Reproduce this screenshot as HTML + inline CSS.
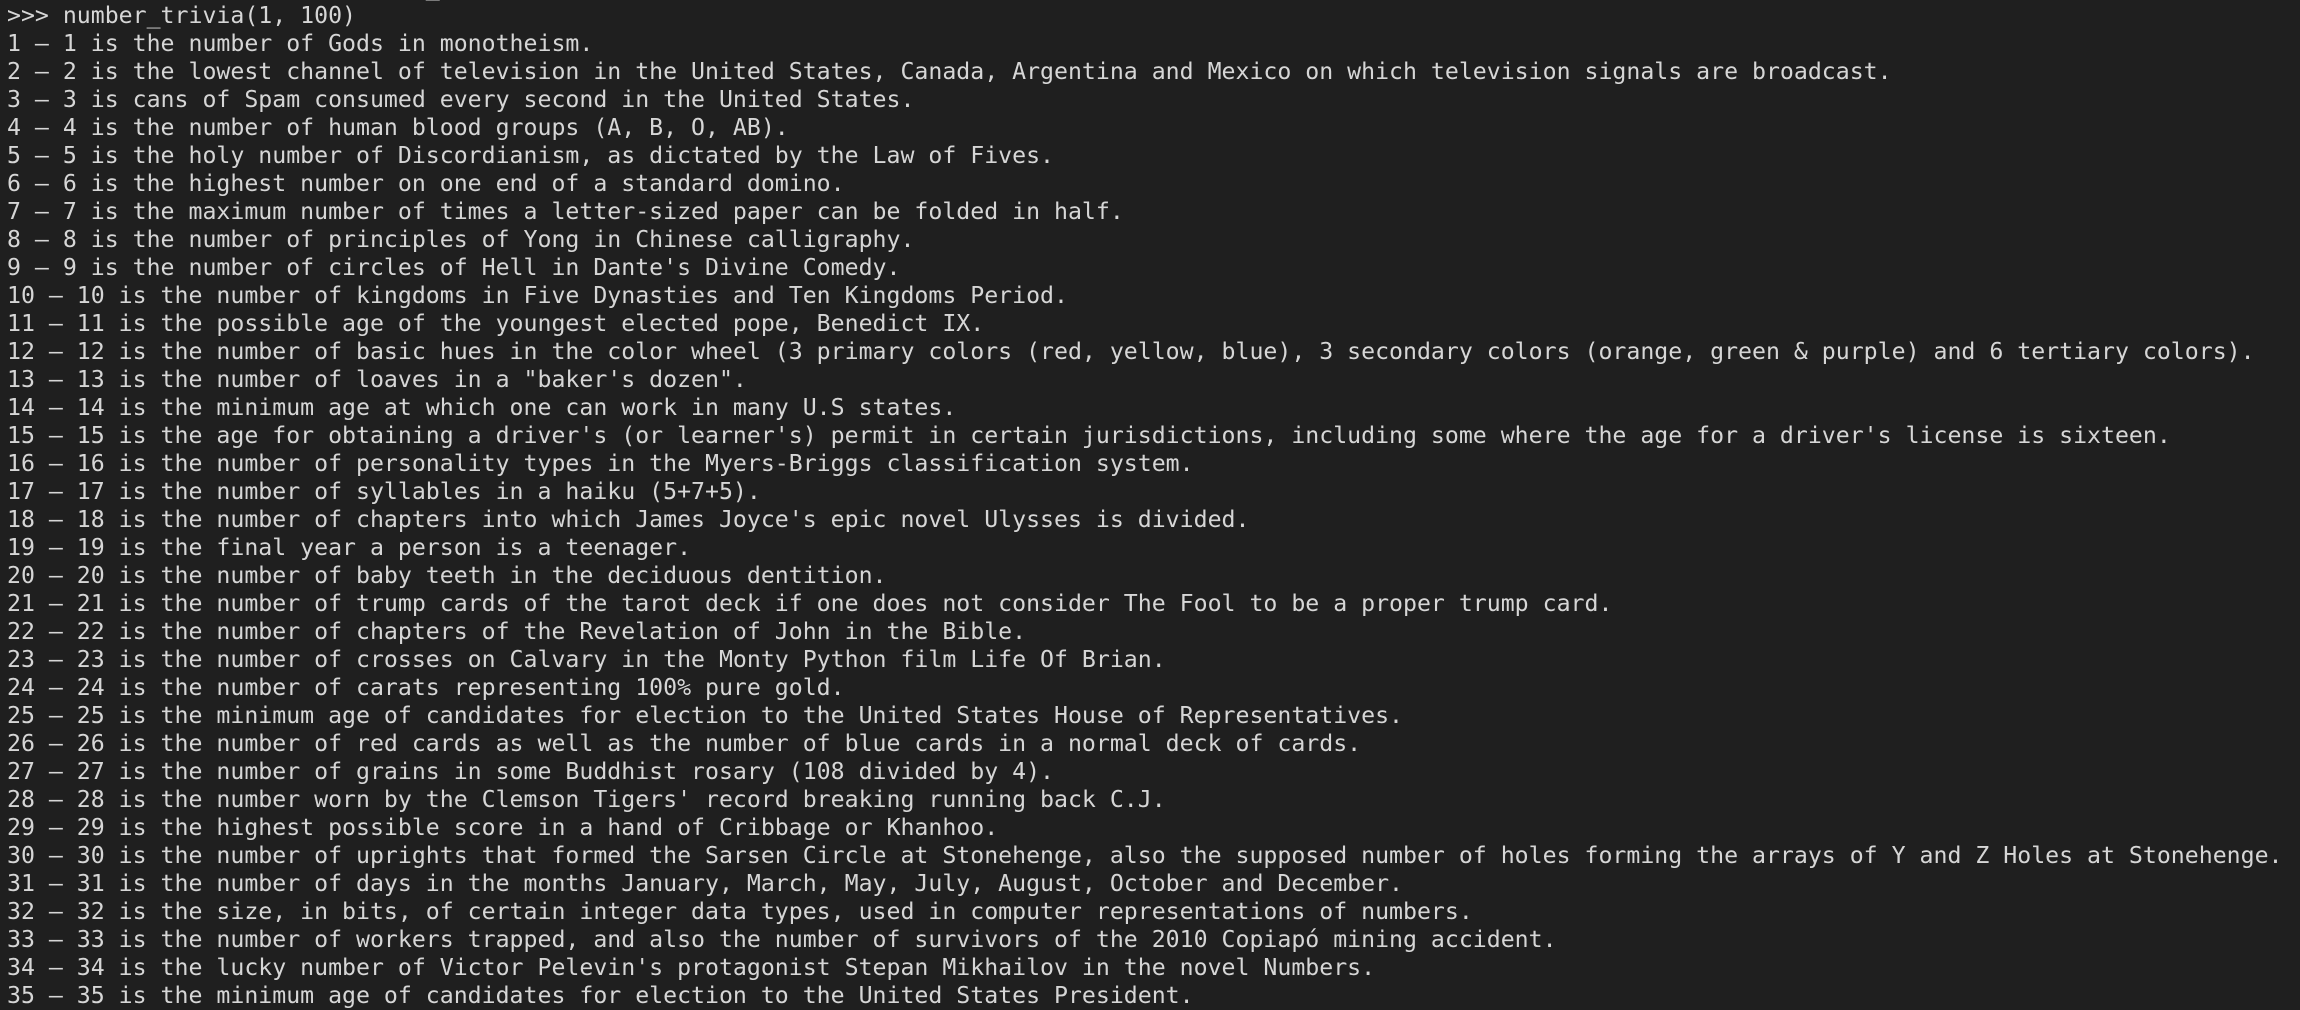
<!DOCTYPE html>
<html><head><meta charset="utf-8"><style>
html,body{margin:0;padding:0;background:#1f1f1f;width:2300px;height:990px;overflow:hidden}
pre{position:absolute;left:7px;top:-26px;margin:0;font-family:"DejaVu Sans Mono","Liberation Mono",monospace;font-size:23.2px;line-height:28px;color:#d6d6d6;white-space:pre}
</style></head><body><pre>...         print(f"{n} – {get_trivia(n, type)}", sep, end, flush=True)   # display trivia for every number, page by page
&gt;&gt;&gt; number_trivia(1, 100)
1 – 1 is the number of Gods in monotheism.
2 – 2 is the lowest channel of television in the United States, Canada, Argentina and Mexico on which television signals are broadcast.
3 – 3 is cans of Spam consumed every second in the United States.
4 – 4 is the number of human blood groups (A, B, O, AB).
5 – 5 is the holy number of Discordianism, as dictated by the Law of Fives.
6 – 6 is the highest number on one end of a standard domino.
7 – 7 is the maximum number of times a letter-sized paper can be folded in half.
8 – 8 is the number of principles of Yong in Chinese calligraphy.
9 – 9 is the number of circles of Hell in Dante's Divine Comedy.
10 – 10 is the number of kingdoms in Five Dynasties and Ten Kingdoms Period.
11 – 11 is the possible age of the youngest elected pope, Benedict IX.
12 – 12 is the number of basic hues in the color wheel (3 primary colors (red, yellow, blue), 3 secondary colors (orange, green &amp; purple) and 6 tertiary colors).
13 – 13 is the number of loaves in a "baker's dozen".
14 – 14 is the minimum age at which one can work in many U.S states.
15 – 15 is the age for obtaining a driver's (or learner's) permit in certain jurisdictions, including some where the age for a driver's license is sixteen.
16 – 16 is the number of personality types in the Myers-Briggs classification system.
17 – 17 is the number of syllables in a haiku (5+7+5).
18 – 18 is the number of chapters into which James Joyce's epic novel Ulysses is divided.
19 – 19 is the final year a person is a teenager.
20 – 20 is the number of baby teeth in the deciduous dentition.
21 – 21 is the number of trump cards of the tarot deck if one does not consider The Fool to be a proper trump card.
22 – 22 is the number of chapters of the Revelation of John in the Bible.
23 – 23 is the number of crosses on Calvary in the Monty Python film Life Of Brian.
24 – 24 is the number of carats representing 100% pure gold.
25 – 25 is the minimum age of candidates for election to the United States House of Representatives.
26 – 26 is the number of red cards as well as the number of blue cards in a normal deck of cards.
27 – 27 is the number of grains in some Buddhist rosary (108 divided by 4).
28 – 28 is the number worn by the Clemson Tigers' record breaking running back C.J.
29 – 29 is the highest possible score in a hand of Cribbage or Khanhoo.
30 – 30 is the number of uprights that formed the Sarsen Circle at Stonehenge, also the supposed number of holes forming the arrays of Y and Z Holes at Stonehenge.
31 – 31 is the number of days in the months January, March, May, July, August, October and December.
32 – 32 is the size, in bits, of certain integer data types, used in computer representations of numbers.
33 – 33 is the number of workers trapped, and also the number of survivors of the 2010 Copiapó mining accident.
34 – 34 is the lucky number of Victor Pelevin's protagonist Stepan Mikhailov in the novel Numbers.
35 – 35 is the minimum age of candidates for election to the United States President.
</pre></body></html>
